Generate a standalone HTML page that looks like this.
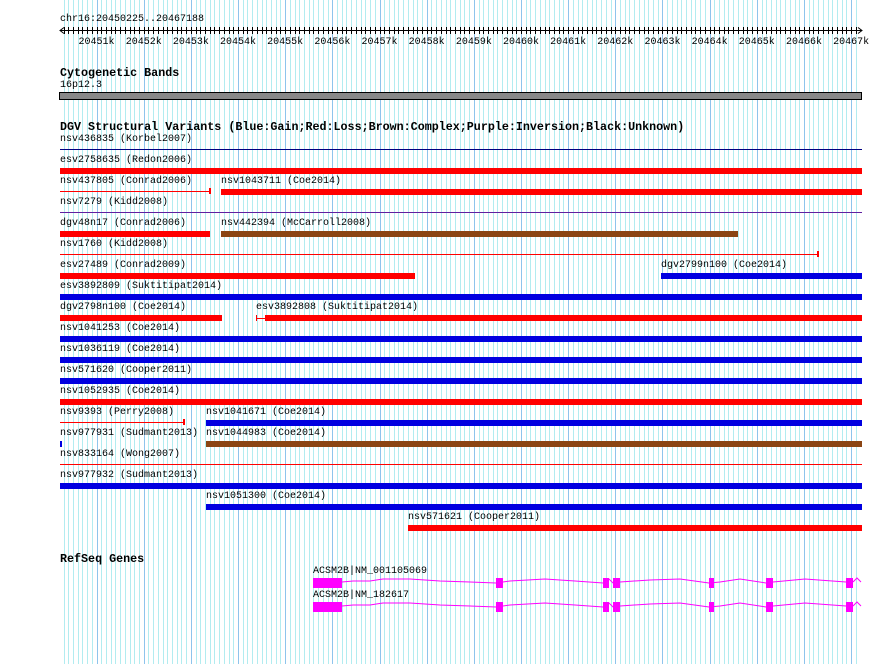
<!DOCTYPE html>
<html><head><meta charset="utf-8"><style>
body{margin:0;width:890px;height:664px;overflow:hidden;background:#fff;position:relative;font-family:"Liberation Mono",monospace;}
#g{position:absolute;left:0;top:0}
.t{position:absolute;font-size:10px;line-height:12px;color:#000;white-space:pre}
.h{position:absolute;font-size:11.7px;font-weight:bold;line-height:13px;white-space:pre}
.b{position:absolute;height:6px}
.l{position:absolute;height:1px}
.R{background:#f00}.B{background:#0000e0}.N{background:#8b4513}
</style></head><body>
<svg id="g" width="890" height="664"></svg>
<div class="t" style="left:60px;top:14px">chr16:20450225..20467188</div>
<svg style="position:absolute;left:0;top:0" width="890" height="50" id="ru"></svg>
<div class="h" style="left:60px;top:67px">Cytogenetic Bands</div>
<div class="t" style="left:60px;top:80px">16p12.3</div>
<div style="position:absolute;left:59px;top:92px;width:801px;height:6px;background:#888;border:1px solid #000"></div>
<div class="h" style="left:60px;top:121px">DGV Structural Variants (Blue:Gain;Red:Loss;Brown:Complex;Purple:Inversion;Black:Unknown)</div>

<div class="t" style="left:60px;top:134px">nsv436835 (Korbel2007)</div>
<div class="l" style="left:60px;top:149px;width:802px;background:#000080"></div>
<div class="t" style="left:60px;top:155px">esv2758635 (Redon2006)</div>
<div class="b R" style="left:60px;top:168px;width:802px"></div>
<div class="t" style="left:60px;top:176px">nsv437805 (Conrad2006)</div>
<div class="l R" style="left:60px;top:191px;width:150px"></div>
<div class="R" style="position:absolute;left:209px;top:188px;width:2px;height:6px"></div>
<div class="t" style="left:221px;top:176px">nsv1043711 (Coe2014)</div>
<div class="b R" style="left:221px;top:189px;width:641px"></div>
<div class="t" style="left:60px;top:197px">nsv7279 (Kidd2008)</div>
<div class="l" style="left:60px;top:212px;width:802px;background:#6020a0"></div>
<div class="t" style="left:60px;top:218px">dgv48n17 (Conrad2006)</div>
<div class="b R" style="left:60px;top:231px;width:150px"></div>
<div class="t" style="left:221px;top:218px">nsv442394 (McCarroll2008)</div>
<div class="b N" style="left:221px;top:231px;width:517px"></div>
<div class="t" style="left:60px;top:239px">nsv1760 (Kidd2008)</div>
<div class="l R" style="left:60px;top:254px;width:758px"></div>
<div class="R" style="position:absolute;left:817px;top:251px;width:2px;height:6px"></div>
<div class="t" style="left:60px;top:260px">esv27489 (Conrad2009)</div>
<div class="b R" style="left:60px;top:273px;width:355px"></div>
<div class="t" style="left:661px;top:260px">dgv2799n100 (Coe2014)</div>
<div class="b B" style="left:661px;top:273px;width:201px"></div>
<div class="t" style="left:60px;top:281px">esv3892809 (Suktitipat2014)</div>
<div class="b B" style="left:60px;top:294px;width:802px"></div>
<div class="t" style="left:60px;top:302px">dgv2798n100 (Coe2014)</div>
<div class="b R" style="left:60px;top:315px;width:162px"></div>
<div class="t" style="left:256px;top:302px">esv3892808 (Suktitipat2014)</div>
<div class="R" style="position:absolute;left:256px;top:315px;width:1px;height:6px"></div>
<div class="l R" style="left:256px;top:318px;width:10px"></div>
<div class="b R" style="left:265px;top:315px;width:597px"></div>
<div class="t" style="left:60px;top:323px">nsv1041253 (Coe2014)</div>
<div class="b B" style="left:60px;top:336px;width:802px"></div>
<div class="t" style="left:60px;top:344px">nsv1036119 (Coe2014)</div>
<div class="b B" style="left:60px;top:357px;width:802px"></div>
<div class="t" style="left:60px;top:365px">nsv571620 (Cooper2011)</div>
<div class="b B" style="left:60px;top:378px;width:802px"></div>
<div class="t" style="left:60px;top:386px">nsv1052935 (Coe2014)</div>
<div class="b R" style="left:60px;top:399px;width:802px"></div>
<div class="t" style="left:60px;top:407px">nsv9393 (Perry2008)</div>
<div class="l R" style="left:60px;top:422px;width:125px"></div>
<div class="R" style="position:absolute;left:183px;top:419px;width:2px;height:6px"></div>
<div class="t" style="left:206px;top:407px">nsv1041671 (Coe2014)</div>
<div class="b B" style="left:206px;top:420px;width:656px"></div>
<div class="t" style="left:60px;top:428px">nsv977931 (Sudmant2013)</div>
<div class="B" style="position:absolute;left:60px;top:441px;width:2px;height:6px"></div>
<div class="t" style="left:206px;top:428px">nsv1044983 (Coe2014)</div>
<div class="b N" style="left:206px;top:441px;width:656px"></div>
<div class="t" style="left:60px;top:449px">nsv833164 (Wong2007)</div>
<div class="l R" style="left:60px;top:464px;width:802px"></div>
<div class="t" style="left:60px;top:470px">nsv977932 (Sudmant2013)</div>
<div class="b B" style="left:60px;top:483px;width:802px"></div>
<div class="t" style="left:206px;top:491px">nsv1051300 (Coe2014)</div>
<div class="b B" style="left:206px;top:504px;width:656px"></div>
<div class="t" style="left:408px;top:512px">nsv571621 (Cooper2011)</div>
<div class="b R" style="left:408px;top:525px;width:454px"></div>

<div class="h" style="left:60px;top:553px">RefSeq Genes</div>
<div class="t" style="left:313px;top:566px">ACSM2B|NM_001105069</div>
<div class="t" style="left:313px;top:590px">ACSM2B|NM_182617</div>
<svg style="position:absolute;left:0;top:0" width="890" height="664" id="gn"></svg>

<script>
var NS="http://www.w3.org/2000/svg";
function X(p){return 60+(p-20450225)*0.04716;}
var g=document.getElementById('g'),s='';
for(var p=20450300;p<=20467100;p+=100){var x=Math.round(X(p))+0.5;var maj=(p%1000==0);
s+='<line x1="'+x+'" y1="0" x2="'+x+'" y2="664" stroke="'+(maj?'#8ec4ec':'#b2ecf0')+'" stroke-width="1"/>';}
g.innerHTML=s;
var r='<line x1="60" y1="30.5" x2="862" y2="30.5" stroke="#000"/>';
r+='<path d="M64 27.5 L60 30.5 L64 33.5 M858 27.5 L862 30.5 L858 33.5" stroke="#000" fill="none"/>';
for(var p=20450300;p<=20467100;p+=100){var x=Math.round(X(p))+0.5;r+='<line x1="'+x+'" y1="27" x2="'+x+'" y2="34" stroke="#000"/>';}
for(var k=20451;k<=20467;k++){r+='<text x="'+X(k*1000)+'" y="44" font-family="Liberation Mono,monospace" font-size="10" text-anchor="middle">'+k+'k</text>';}
document.getElementById('ru').innerHTML=r;
var ex=[[313,342],[496,503],[603,609],[613,620],[709,714],[766,773],[846,853]];
var gs='';
[582,606].forEach(function(y){
 var pts='342,'+y+' 353,'+(y-1)+' 370,'+(y-1)+' 383,'+(y-3)+' 410,'+(y-3)+' 440,'+(y-1)+' 470,'+y+' 496,'+(y+1)+' 510,'+(y-1)+' 545,'+(y-3)+' 575,'+(y-1)+' 603,'+(y+1)+
 ' 609,'+(y-3)+' 613,'+(y+1)+' 620,'+y+' 650,'+(y-2)+' 680,'+(y-3)+' 709,'+(y+1)+' 720,'+y+' 740,'+(y-3)+' 766,'+(y+1)+' 773,'+y+' 805,'+(y-3)+' 846,'+y;
 gs+='<polyline points="'+pts+'" fill="none" stroke="#f0f" stroke-width="1"/>';
 gs+='<polyline points="853,'+y+' 857,'+(y-4)+' 861,'+y+'" fill="none" stroke="#f0f"/>';
 ex.forEach(function(e){gs+='<rect x="'+e[0]+'" y="'+(y-4)+'" width="'+(e[1]-e[0])+'" height="10" fill="#f0f"/>';});
});
document.getElementById('gn').innerHTML=gs;
</script>
</body></html>
